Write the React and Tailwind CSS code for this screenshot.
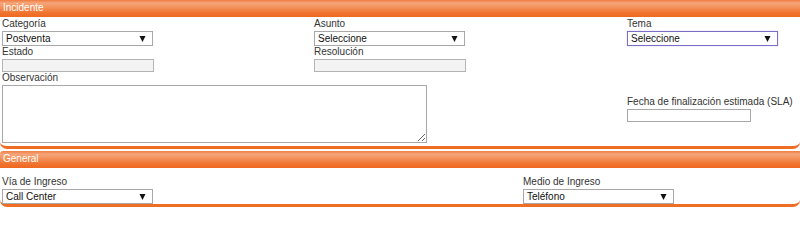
import React from "react";

const hdr =
  "h-[17px] leading-[16px] pl-[3px] text-white text-[10px] bg-[linear-gradient(to_bottom,#f07c40_0%,#f5a67c_18%,#f39058_45%,#f07430_75%,#ee6820_100%)]";

function Arrow() {
  return (
    <svg width="7" height="6" viewBox="0 0 7 6" className="mr-[6px] shrink-0">
      <polygon points="0.5,0 6.5,0 3.5,6" fill="#111" />
    </svg>
  );
}

function Select({ value, focus, w = "w-[151px]" }) {
  return (
    <div
      className={`${w} h-[15px] flex items-center justify-between bg-white border ${
        focus ? "border-[#7a6ec8] shadow-[0_0_1px_#b9b2e6]" : "border-[#a8a8a8]"
      } pl-[3px] text-[10px] text-[#111] leading-[13px]`}
    >
      <span>{value}</span>
      <Arrow />
    </div>
  );
}

function Input({ w = "w-[152px]" }) {
  return <div className={`${w} h-[13px] bg-[#f3f3f3] border border-[#b4b4b4]`} />;
}

function Label({ children }) {
  return <div className="h-[12px] leading-[12px] text-[10px] text-[#333]">{children}</div>;
}

export default function App() {
  return (
    <div className="w-[800px] h-[209px] overflow-hidden bg-white font-['Liberation_Sans',Arial,sans-serif]">
      <div className="border-b-[3px] border-[#f06e24] rounded-b-[7px] pb-[3px]">
        <div className={`${hdr} h-[16px] leading-[15px] bg-[linear-gradient(to_bottom,#f5a67c_0%,#f39058_35%,#f07430_70%,#ee6820_100%)]`}>
          Incidente
        </div>
        <div className="pl-[2px] pt-[1px]">
          <div className="grid grid-cols-[312px_313px_1fr]">
            <div>
              <Label>Categoría</Label>
              <div className="mt-[1px]">
                <Select value="Postventa" />
              </div>
            </div>
            <div>
              <Label>Asunto</Label>
              <div className="mt-[1px]">
                <Select value="Seleccione" />
              </div>
            </div>
            <div>
              <Label>Tema</Label>
              <div className="mt-[1px]">
                <Select value="Seleccione" focus />
              </div>
            </div>
          </div>
          <div className="grid grid-cols-[312px_313px_1fr]">
            <div>
              <Label>Estado</Label>
              <div className="mt-[1px]">
                <Input />
              </div>
            </div>
            <div>
              <Label>Resolución</Label>
              <div className="mt-[1px]">
                <Input />
              </div>
            </div>
            <div />
          </div>
          <div className="grid grid-cols-[625px_1fr] items-center">
            <div>
              <Label>Observación</Label>
              <textarea className="block mt-[1px] w-[425px] h-[58px] border border-[#a8a8a8] bg-white resize outline-none" />
            </div>
            <div className="pt-[2px]">
              <Label>Fecha de finalización estimada (SLA)</Label>
              <div className="mt-[1px]">
                <div className="w-[124px] h-[13px] bg-white border border-[#a8a8a8]" />
              </div>
            </div>
          </div>
        </div>
      </div>
      <div className="mt-[2px] border-b-[3px] border-[#f06e24] rounded-b-[7px]">
        <div className={`${hdr} rounded-tl-[3px]`}>General</div>
        <div className="pl-[2px] pt-[8px] grid grid-cols-[521px_1fr]">
          <div>
            <Label>Vía de Ingreso</Label>
            <div className="mt-[1px]">
              <Select value="Call Center" />
            </div>
          </div>
          <div>
            <Label>Medio de Ingreso</Label>
            <div className="mt-[1px]">
              <Select value="Teléfono" />
            </div>
          </div>
        </div>
      </div>
    </div>
  );
}
